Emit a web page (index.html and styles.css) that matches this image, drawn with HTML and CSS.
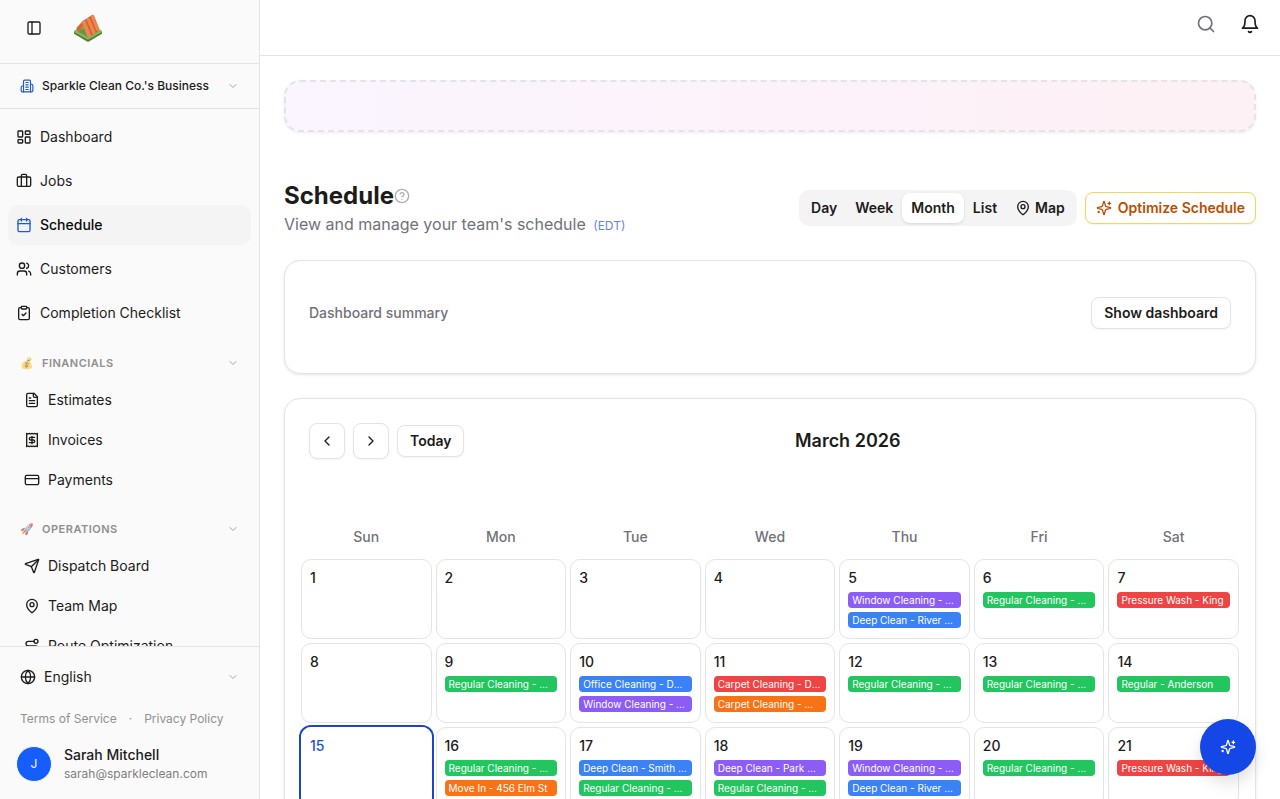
FILE: index.html
```html
<!DOCTYPE html>
<html lang="en">
<head>
    <meta charset="UTF-8">
    <meta name="viewport" content="width=device-width, initial-scale=1.0">
    <title>Schedule</title>
    <link rel="stylesheet" href="styles.css">
</head>
<body>
    <!-- Shared icons -->
    <svg class="sprite" aria-hidden="true">
        <symbol id="chevron-down" viewBox="0 0 24 24"><path d="m6 9 6 6 6-6"/></symbol>
        <symbol id="map-pin" viewBox="0 0 24 24"><path d="M20 10c0 4.993-5.539 10.193-7.399 11.799a1 1 0 0 1-1.202 0C9.539 20.193 4 14.993 4 10a8 8 0 0 1 16 0"/><circle cx="12" cy="10" r="3"/></symbol>
        <symbol id="sparkles" viewBox="0 0 24 24"><path d="M9.937 15.5A2 2 0 0 0 8.5 14.063l-6.135-1.582a.5.5 0 0 1 0-.962L8.5 9.936A2 2 0 0 0 9.937 8.5l1.582-6.135a.5.5 0 0 1 .963 0L14.063 8.5A2 2 0 0 0 15.5 9.937l6.135 1.581a.5.5 0 0 1 0 .964L15.5 14.063a2 2 0 0 0-1.437 1.437l-1.582 6.135a.5.5 0 0 1-.963 0z"/><path d="M20 3v4M22 5h-4M4 17v2M5 18H3"/></symbol>
    </svg>

    <div class="app">
        <aside class="sidebar">
            <div class="sidebar-header">
                <button class="icon-button" aria-label="Toggle sidebar">
                    <svg class="icon" viewBox="0 0 24 24"><rect width="18" height="18" x="3" y="3" rx="2"/><path d="M9 3v18"/></svg>
                </button>
                <svg class="logo" viewBox="0 0 30 30" role="img" aria-label="Home">
                    <path fill="#55803a" d="M1 18.500v2.200L14 28.500q1 .6 2 0l13-7.800v-2.200z"/>
                    <path fill="#86b35c" d="M1.500 17.600 14 10.500q1-.5 2 0l12.500 7.100q1 .8 0 1.600L16 26.200q-1 .6-2 0L1.500 19.200q-1-.8 0-1.600z"/>
                    <path fill="#6a9445" d="m5 18.500 10-6 10 6-10 5.800z"/>
                    <g fill="none" stroke-linecap="round" stroke-linejoin="round">
                        <path stroke="#d9662f" stroke-width="4" d="m11 9.500-5.500 6.200"/>
                        <path fill="#d2602c" stroke="#d2602c" stroke-width="3" d="m11 9 8.500-5.500 5 13-3.500 2-5 3.500z"/>
                        <path stroke="#ec8650" stroke-width="4" d="m11 9.500 5 13"/>
                        <path stroke="#ec8650" stroke-width="3.500" d="m15.300 6.500 5.500 13M19.500 3.500l5.300 13"/>
                    </g>
                </svg>
            </div>

            <button class="business">
                <svg class="icon icon-small blue" viewBox="0 0 24 24"><path d="M6 22V4a2 2 0 0 1 2-2h8a2 2 0 0 1 2 2v18Z"/><path d="M6 12H4a2 2 0 0 0-2 2v6a2 2 0 0 0 2 2h2M18 9h2a2 2 0 0 1 2 2v9a2 2 0 0 1-2 2h-2M10 6h4M10 10h4M10 14h4M10 18h4"/></svg>
                <span>Sparkle Clean Co.'s Business</span>
                <svg class="icon chevron"><use href="#chevron-down"/></svg>
            </button>

            <nav class="sidebar-nav">
                <div class="nav-main">
                    <a class="nav-item" href="#">
                        <svg class="icon" viewBox="0 0 24 24"><rect width="7" height="9" x="3" y="3" rx="1"/><rect width="7" height="5" x="14" y="3" rx="1"/><rect width="7" height="9" x="14" y="12" rx="1"/><rect width="7" height="5" x="3" y="16" rx="1"/></svg>
                        Dashboard
                    </a>
                    <a class="nav-item" href="#">
                        <svg class="icon" viewBox="0 0 24 24"><path d="M16 20V4a2 2 0 0 0-2-2h-4a2 2 0 0 0-2 2v16"/><rect width="20" height="14" x="2" y="6" rx="2"/></svg>
                        Jobs
                    </a>
                    <a class="nav-item active" href="#" aria-current="page">
                        <svg class="icon blue" viewBox="0 0 24 24"><path d="M8 2v4M16 2v4M3 10h18"/><rect width="18" height="18" x="3" y="4" rx="2"/></svg>
                        Schedule
                    </a>
                    <a class="nav-item" href="#">
                        <svg class="icon" viewBox="0 0 24 24"><path d="M16 21v-2a4 4 0 0 0-4-4H6a4 4 0 0 0-4 4v2"/><circle cx="9" cy="7" r="4"/><path d="M22 21v-2a4 4 0 0 0-3-3.870M16 3.130a4 4 0 0 1 0 7.750"/></svg>
                        Customers
                    </a>
                    <a class="nav-item" href="#">
                        <svg class="icon" viewBox="0 0 24 24"><rect width="8" height="4" x="8" y="2" rx="1"/><path d="M16 4h2a2 2 0 0 1 2 2v14a2 2 0 0 1-2 2H6a2 2 0 0 1-2-2V6a2 2 0 0 1 2-2h2M9 14l2 2 4-4"/></svg>
                        Completion Checklist
                    </a>
                </div>

                <button class="group-label">
                    <span class="emoji">💰</span>
                    <span>FINANCIALS</span>
                    <svg class="icon chevron"><use href="#chevron-down"/></svg>
                </button>
                <div class="nav-group">
                    <a class="nav-item" href="#">
                        <svg class="icon" viewBox="0 0 24 24"><path d="M15 2H6a2 2 0 0 0-2 2v16a2 2 0 0 0 2 2h12a2 2 0 0 0 2-2V7Z"/><path d="M14 2v4a2 2 0 0 0 2 2h4M10 9H8M16 13H8M16 17H8"/></svg>
                        Estimates
                    </a>
                    <a class="nav-item" href="#">
                        <svg class="icon" viewBox="0 0 24 24"><path d="M4 2v20l2-1 2 1 2-1 2 1 2-1 2 1 2-1 2 1V2l-2 1-2-1-2 1-2-1-2 1-2-1-2 1Z"/><path d="M16 8h-6a2 2 0 1 0 0 4h4a2 2 0 1 1 0 4H8M12 17.500v-11"/></svg>
                        Invoices
                    </a>
                    <a class="nav-item" href="#">
                        <svg class="icon" viewBox="0 0 24 24"><rect width="20" height="14" x="2" y="5" rx="2"/><path d="M2 10h20"/></svg>
                        Payments
                    </a>
                </div>

                <button class="group-label">
                    <span class="emoji">🚀</span>
                    <span>OPERATIONS</span>
                    <svg class="icon chevron"><use href="#chevron-down"/></svg>
                </button>
                <div class="nav-group">
                    <a class="nav-item" href="#">
                        <svg class="icon" viewBox="0 0 24 24"><path d="M14.536 21.686a.5.5 0 0 0 .937-.024l6.500-19a.496.496 0 0 0-.635-.635l-19 6.500a.5.5 0 0 0-.024.937l7.930 3.180a2 2 0 0 1 1.112 1.110z"/><path d="m21.854 2.147-10.940 10.939"/></svg>
                        Dispatch Board
                    </a>
                    <a class="nav-item" href="#">
                        <svg class="icon"><use href="#map-pin"/></svg>
                        Team Map
                    </a>
                    <a class="nav-item" href="#">
                        <svg class="icon" viewBox="0 0 24 24"><circle cx="6" cy="19" r="3"/><path d="M9 19h8.500a3.500 3.500 0 0 0 0-7h-11a3.500 3.500 0 0 1 0-7H15"/><circle cx="18" cy="5" r="3"/></svg>
                        Route Optimization
                    </a>
                </div>
            </nav>

            <div class="sidebar-footer">
                <button class="language">
                    <svg class="icon" viewBox="0 0 24 24"><circle cx="12" cy="12" r="10"/><path d="M12 2a14.500 14.500 0 0 0 0 20 14.500 14.500 0 0 0 0-20M2 12h20"/></svg>
                    <span>English</span>
                    <svg class="icon chevron"><use href="#chevron-down"/></svg>
                </button>
                <div class="legal">
                    <a href="#">Terms of Service</a>
                    <span>·</span>
                    <a href="#">Privacy Policy</a>
                </div>
                <div class="user">
                    <span class="avatar">J</span>
                    <div>
                        <div class="user-name">Sarah Mitchell</div>
                        <div class="user-email">sarah@sparkleclean.com</div>
                    </div>
                </div>
            </div>
        </aside>

        <div class="main">
            <header class="topbar">
                <button class="icon-button muted" aria-label="Search">
                    <svg class="icon icon-large" viewBox="0 0 24 24"><circle cx="11" cy="11" r="8"/><path d="m21 21-4.300-4.300"/></svg>
                </button>
                <button class="icon-button" aria-label="Notifications">
                    <svg class="icon icon-large" viewBox="0 0 24 24"><path d="M6 8a6 6 0 0 1 12 0c0 7 3 9 3 9H3s3-2 3-9M10.300 21a1.940 1.940 0 0 0 3.400 0"/></svg>
                </button>
            </header>

            <main class="content">
                <div class="banner"></div>

                <div class="page-header">
                    <div>
                        <div class="title-row">
                            <h1>Schedule</h1>
                            <svg class="icon help" viewBox="0 0 24 24"><circle cx="12" cy="12" r="10"/><path d="M9.090 9a3 3 0 0 1 5.830 1c0 2-3 3-3 3M12 17h.01"/></svg>
                        </div>
                        <p class="subtitle">View and manage your team's schedule <span class="timezone">(EDT)</span></p>
                    </div>
                    <div class="actions">
                        <div class="tabs">
                            <button class="tab">Day</button>
                            <button class="tab">Week</button>
                            <button class="tab selected">Month</button>
                            <button class="tab">List</button>
                            <button class="tab"><svg class="icon"><use href="#map-pin"/></svg>Map</button>
                        </div>
                        <button class="button optimize"><svg class="icon"><use href="#sparkles"/></svg>Optimize Schedule</button>
                    </div>
                </div>

                <section class="card summary">
                    <span>Dashboard summary</span>
                    <button class="button">Show dashboard</button>
                </section>

                <section class="card">
                    <div class="toolbar">
                        <button class="button square" aria-label="Previous month">
                            <svg class="icon" viewBox="0 0 24 24"><path d="m15 18-6-6 6-6"/></svg>
                        </button>
                        <button class="button square" aria-label="Next month">
                            <svg class="icon" viewBox="0 0 24 24"><path d="m9 18 6-6-6-6"/></svg>
                        </button>
                        <button class="button">Today</button>
                        <h2>March 2026</h2>
                    </div>

                    <table class="calendar">
                        <thead>
                            <tr><th>Sun</th><th>Mon</th><th>Tue</th><th>Wed</th><th>Thu</th><th>Fri</th><th>Sat</th></tr>
                        </thead>
                        <tbody>
                            <tr>
                                <td><div class="date">1</div></td>
                                <td><div class="date">2</div></td>
                                <td><div class="date">3</div></td>
                                <td><div class="date">4</div></td>
                                <td>
                                    <div class="date">5</div>
                                    <div class="event purple">Window Cleaning - Wilson</div>
                                    <div class="event azure">Deep Clean - River House</div>
                                </td>
                                <td>
                                    <div class="date">6</div>
                                    <div class="event green">Regular Cleaning - Weekly</div>
                                </td>
                                <td>
                                    <div class="date">7</div>
                                    <div class="event red">Pressure Wash - King</div>
                                </td>
                            </tr>
                            <tr>
                                <td><div class="date">8</div></td>
                                <td>
                                    <div class="date">9</div>
                                    <div class="event green">Regular Cleaning - Weekly</div>
                                </td>
                                <td>
                                    <div class="date">10</div>
                                    <div class="event azure">Office Cleaning - Downtown</div>
                                    <div class="event purple">Window Cleaning - Wilson</div>
                                </td>
                                <td>
                                    <div class="date">11</div>
                                    <div class="event red">Carpet Cleaning - Downtown</div>
                                    <div class="event orange">Carpet Cleaning - Wilson</div>
                                </td>
                                <td>
                                    <div class="date">12</div>
                                    <div class="event green">Regular Cleaning - Weekly</div>
                                </td>
                                <td>
                                    <div class="date">13</div>
                                    <div class="event green">Regular Cleaning - Weekly</div>
                                </td>
                                <td>
                                    <div class="date">14</div>
                                    <div class="event green">Regular - Anderson</div>
                                </td>
                            </tr>
                            <tr>
                                <td class="today"><div class="date">15</div></td>
                                <td>
                                    <div class="date">16</div>
                                    <div class="event green">Regular Cleaning - Weekly</div>
                                    <div class="event orange">Move In - 456 Elm St</div>
                                </td>
                                <td>
                                    <div class="date">17</div>
                                    <div class="event azure">Deep Clean - Smith House</div>
                                    <div class="event green">Regular Cleaning - Weekly</div>
                                </td>
                                <td>
                                    <div class="date">18</div>
                                    <div class="event purple">Deep Clean - Park West</div>
                                    <div class="event green">Regular Cleaning - Weekly</div>
                                </td>
                                <td>
                                    <div class="date">19</div>
                                    <div class="event purple">Window Cleaning - Wilson</div>
                                    <div class="event azure">Deep Clean - River House</div>
                                </td>
                                <td>
                                    <div class="date">20</div>
                                    <div class="event green">Regular Cleaning - Weekly</div>
                                </td>
                                <td>
                                    <div class="date">21</div>
                                    <div class="event red">Pressure Wash - King</div>
                                </td>
                            </tr>
                        </tbody>
                    </table>
                </section>
            </main>
        </div>
    </div>

    <button class="assistant" aria-label="Open assistant"><svg class="icon"><use href="#sparkles"/></svg></button>
</body>
</html>
```
FILE: styles.css
```css
* {
    box-sizing: border-box;
}
body {
    margin: 0;
    font-family: Inter, 'Liberation Sans', sans-serif;
    font-size: 14px;
    line-height: 20px;
    color: #1c1c1a;
    background-color: #fff;
}
h1, h2, p {
    margin: 0;
}
a {
    color: inherit;
    text-decoration: none;
}
button {
    font: inherit;
    color: inherit;
    background: none;
    border: none;
    padding: 0;
    cursor: pointer;
}
.sprite {
    display: none;
}
.icon {
    width: 16px;
    height: 16px;
    flex-shrink: 0;
    fill: none;
    stroke: currentColor;
    stroke-width: 2;
    stroke-linecap: round;
    stroke-linejoin: round;
}
.icon-small {
    width: 14px;
    height: 14px;
}
.icon-large {
    width: 20px;
    height: 20px;
}
.blue {
    color: #2058dc;
}
.chevron {
    width: 12px;
    height: 12px;
    margin-left: auto;
    color: #a3a3a3;
}
.icon-button {
    display: flex;
    align-items: center;
    justify-content: center;
    width: 36px;
    height: 36px;
}
.muted {
    color: #71717a;
}
.app {
    display: flex;
    height: 100vh;
}

/* Sidebar */
.sidebar {
    display: flex;
    flex-direction: column;
    width: 260px;
    flex-shrink: 0;
    background-color: #fafafa;
    border-right: 1px solid #e4e4e7;
}
.sidebar-header {
    display: flex;
    align-items: center;
    gap: 20px;
    height: 64px;
    padding: 0 16px 8px;
    border-bottom: 1px solid #e4e4e7;
}
.logo {
    width: 32px;
    height: 30px;
}
.business {
    display: flex;
    align-items: center;
    gap: 8px;
    height: 45px;
    flex-shrink: 0;
    padding: 0 20px;
    font-size: 12px;
    font-weight: 500;
    border-bottom: 1px solid #e4e4e7;
}
.sidebar-nav {
    flex: 1;
    min-height: 0;
    overflow: hidden;
    padding: 8px;
}
.nav-main,
.nav-group {
    display: flex;
    flex-direction: column;
    gap: 4px;
}
.nav-group {
    margin-bottom: 15px;
}
.nav-item {
    display: flex;
    align-items: center;
    gap: 8px;
    height: 40px;
    padding: 0 8px;
    border-radius: 10px;
}
.nav-item.active {
    font-weight: 500;
    color: #0a0a0a;
    background-color: #f4f4f4;
}
.nav-main {
    margin-bottom: 14px;
}
.nav-group .nav-item {
    height: 36px;
    padding: 0 16px;
}
.group-label {
    display: flex;
    align-items: center;
    gap: 8px;
    width: 100%;
    height: 32px;
    margin-bottom: 3px;
    padding: 0 12px;
    font-size: 11px;
    font-weight: 600;
    letter-spacing: 0.5px;
    color: #8f8f8f;
}
.emoji {
    width: 14px;
    opacity: 0.6;
    letter-spacing: 0;
}
.sidebar-footer {
    padding: 12px 16px 16px;
    border-top: 1px solid #e4e4e7;
}
.language {
    display: flex;
    align-items: center;
    gap: 8px;
    width: 100%;
    height: 36px;
    padding: 0 4px;
}
.legal {
    display: flex;
    gap: 12px;
    padding: 14px 4px 16px;
    font-size: 12px;
    color: #919191;
}
.user {
    display: flex;
    align-items: center;
    gap: 12px;
}
.avatar {
    display: flex;
    align-items: center;
    justify-content: center;
    width: 36px;
    height: 36px;
    border: 1px solid #fafafa;
    border-radius: 50%;
    font-size: 12px;
    color: #fff;
    background-color: #155dfc;
}
.user-name {
    font-weight: 500;
}
.user-email {
    font-size: 12px;
    line-height: 18px;
    color: #808080;
}

/* Main column */
.main {
    display: flex;
    flex-direction: column;
    flex: 1;
    min-width: 0;
}
.topbar {
    display: flex;
    justify-content: flex-end;
    gap: 8px;
    height: 56px;
    flex-shrink: 0;
    padding: 6px 12px;
    border-bottom: 1px solid #e4e4e7;
}
.content {
    display: flex;
    flex-direction: column;
    gap: 24px;
    flex: 1;
    min-height: 0;
    padding: 24px;
    overflow-y: auto;
    scrollbar-width: none;
}
.content > * {
    flex-shrink: 0;
}
.banner {
    height: 52px;
    margin-bottom: 24px;
    border: 2px dashed #e4e4e7;
    border-radius: 16px;
    background: linear-gradient(to right, #faf5ff, #fdf2fa, #fdf1f5);
    box-shadow: 0 1px 3px rgba(0, 0, 0, 0.08);
}
.page-header,
.actions,
.title-row {
    display: flex;
    align-items: center;
}
.page-header {
    justify-content: space-between;
}
h1 {
    font-size: 24px;
    line-height: 32px;
    font-weight: 700;
}
.help {
    color: #b0b0b4;
}
.subtitle {
    font-size: 16px;
    line-height: 24px;
    color: #71717a;
}
.timezone {
    margin-left: 3px;
    font-size: 12px;
    line-height: 16px;
    color: #6485e8;
}
.actions {
    gap: 8px;
}
.tabs {
    display: flex;
    padding: 3px;
    border-radius: 10px;
    background-color: #f4f4f4;
}
.tab {
    display: flex;
    align-items: center;
    gap: 4px;
    height: 30px;
    padding: 0 9px;
    border-radius: 8px;
    font-weight: 600;
}
.tab.selected {
    background-color: #fff;
    box-shadow: 0 1px 3px rgba(0, 0, 0, 0.12);
}
.button {
    display: flex;
    align-items: center;
    justify-content: center;
    gap: 6px;
    height: 32px;
    padding: 0 12px;
    border: 1px solid #e4e4e7;
    border-radius: 8px;
    font-weight: 600;
    background-color: #fff;
    box-shadow: 0 1px 2px rgba(0, 0, 0, 0.05);
}
.button.square {
    width: 36px;
    height: 36px;
    padding: 0;
}
.button.optimize {
    padding: 0 10px;
    color: #bb4d00;
    border-color: #f5d65a;
}
.card {
    border: 1px solid #e4e4e7;
    border-radius: 16px;
    background-color: #fff;
    box-shadow: 0 1px 3px rgba(0, 0, 0, 0.1);
}
.summary {
    display: flex;
    align-items: center;
    justify-content: space-between;
    padding: 36px 24px 44px;
    font-weight: 500;
    color: #71717a;
}
.summary .button {
    color: #1c1c1a;
}

/* Calendar */
.toolbar {
    display: flex;
    align-items: center;
    gap: 8px;
    padding: 24px 24px 56px;
}
.toolbar h2 {
    flex: 1;
    padding-right: 8px;
    font-size: 18px;
    line-height: 28px;
    font-weight: 600;
    text-align: center;
}
.calendar {
    width: calc(100% - 24px);
    margin: 0 12px 12px;
    table-layout: fixed;
    border-collapse: separate;
    border-spacing: 4px;
}
.calendar th {
    padding: 8px 0;
    font-weight: 500;
    color: #71717a;
}
.calendar td {
    height: 80px;
    padding: 8px;
    vertical-align: top;
    border: 1px solid #e4e4e7;
    border-radius: 10px;
}
.calendar td.today {
    color: #1d4fd8;
    border-color: #fff;
    box-shadow: 0 0 0 2px #1947c8;
}
.date {
    font-weight: 500;
}
.event {
    height: 16px;
    margin-top: 4px;
    padding: 0 4px;
    border-radius: 4px;
    font-size: 10px;
    line-height: 16px;
    color: #fff;
    white-space: nowrap;
    overflow: hidden;
    text-overflow: ellipsis;
}
.green {
    background-color: #22c55e;
}
.azure {
    background-color: #3b82f6;
}
.purple {
    background-color: #8b5cf6;
}
.red {
    background-color: #ef4444;
}
.orange {
    background-color: #f97316;
}

.assistant {
    position: fixed;
    right: 24px;
    bottom: 24px;
    display: flex;
    align-items: center;
    justify-content: center;
    width: 56px;
    height: 56px;
    border-radius: 50%;
    color: #fff;
    background-color: #1447e6;
    box-shadow: 0 8px 16px rgba(0, 0, 0, 0.12);
}
```
